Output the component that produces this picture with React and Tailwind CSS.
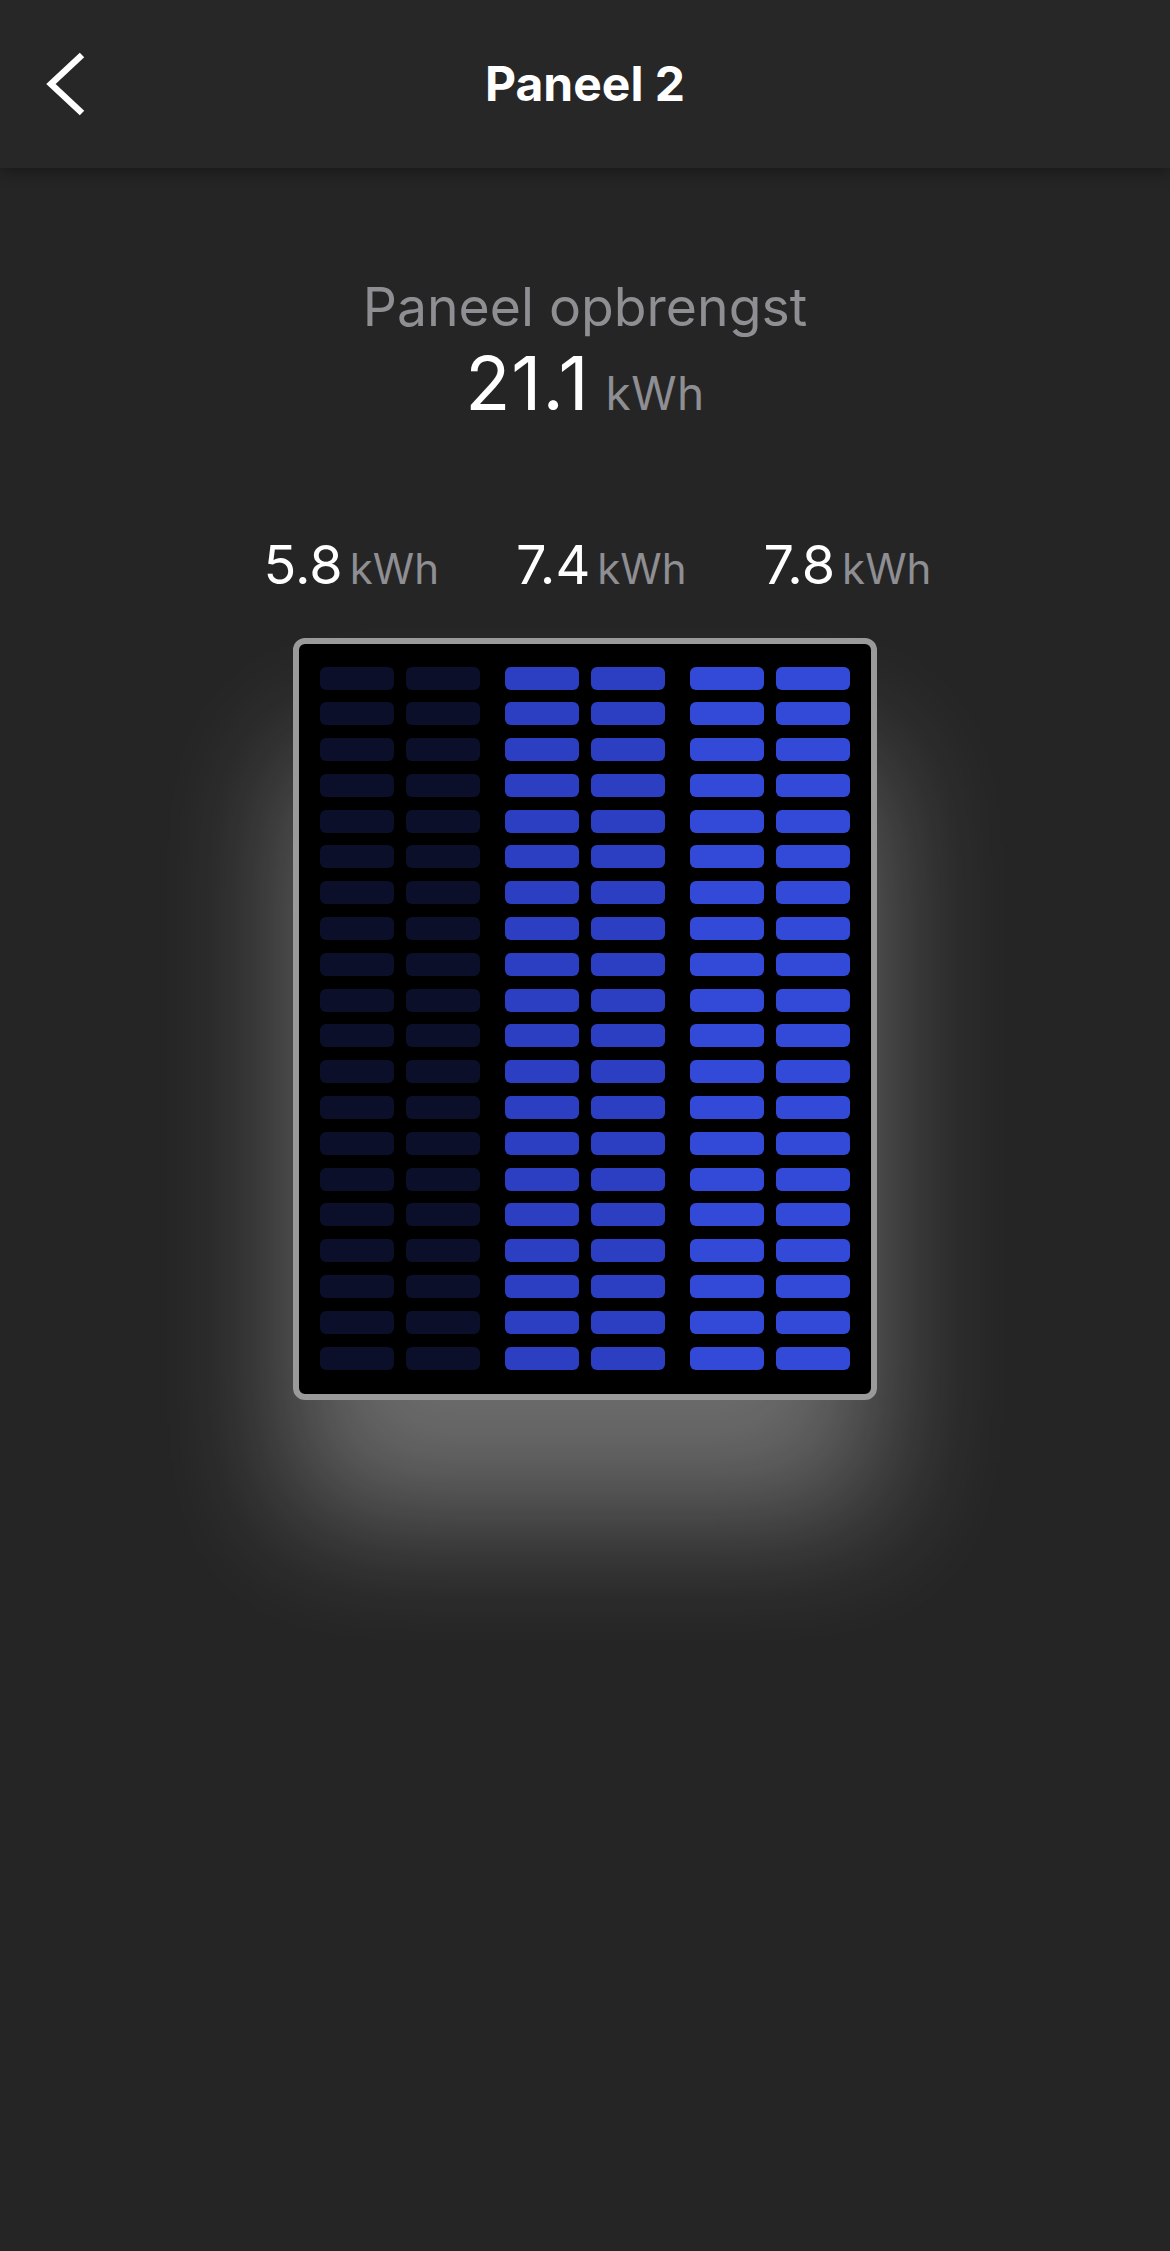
import React from 'react'

const groups = [
  { value: '5.8', cell: 'bg-[#0b0f2a]' },
  { value: '7.4', cell: 'bg-[#2c3fc2]' },
  { value: '7.8', cell: 'bg-[#3349d8]' },
]

function BackIcon() {
  return (
    <svg width="42" height="66" viewBox="0 0 42 66" fill="none">
      <polyline points="36,4 5,33 36,62" stroke="#ffffff" strokeWidth="6.5" strokeLinejoin="miter" />
    </svg>
  )
}

function Panel() {
  return (
    <div className="rounded-[12px] border-[6px] border-[#9a9a9a] bg-black px-[21px] pt-[23px] pb-[24px] shadow-[0_115px_135px_rgba(255,255,255,0.33)]">
      <div className="flex justify-center gap-[25px]">
        {groups.map((g, gi) => (
          <div key={gi} className="grid grid-cols-2 gap-x-[12px] gap-y-[12.8px]">
            {Array.from({ length: 40 }).map((_, i) => (
              <div key={i} className={`h-[23px] w-[74px] rounded-[6px] ${g.cell}`} />
            ))}
          </div>
        ))}
      </div>
    </div>
  )
}

export default function App() {
  return (
    <div className="min-h-[2251px] bg-[#252525] font-['Inter',sans-serif] text-white">
      <header className="relative z-10 grid h-[168px] grid-cols-[1fr_auto_1fr] items-center bg-[#272727] shadow-[0_4px_14px_rgba(0,0,0,0.35)]">
        <div className="pl-[46px]">
          <BackIcon />
        </div>
        <h1 className="text-[48px] font-bold leading-none">Paneel 2</h1>
        <div />
      </header>

      <div className="flex flex-col items-center">
        <p className="mt-[112px] text-[53.5px] leading-none text-[#8e8e93]">Paneel opbrengst</p>
        <div className="mt-[12px] flex items-baseline gap-[16px]">
          <span className="text-[74px] leading-none tracking-[1px]">21.1</span>
          <span className="text-[46px] leading-none tracking-[0.5px] text-[#8e8e93]">kWh</span>
        </div>

        <div className="mt-[118px] flex items-baseline justify-center gap-[77px] pl-[25px]">
          {groups.map((g) => (
            <div key={g.value} className="flex items-baseline gap-[7px]">
              <span className="text-[54px] leading-none">{g.value}</span>
              <span className="text-[42px] leading-none text-[#8e8e93]">kWh</span>
            </div>
          ))}
        </div>

        <div className="mt-[46px]">
          <Panel />
        </div>
      </div>
    </div>
  )
}
